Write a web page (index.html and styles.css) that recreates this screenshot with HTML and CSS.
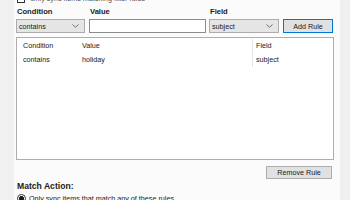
FILE: index.html
```html
<!DOCTYPE html>
<html lang="en">
<head>
  <meta charset="UTF-8" />
  <title>Sync Rules</title>
  <link rel="stylesheet" href="styles.css">
</head>
<body>

<div class="strip"></div>

<main class="panel">
  <div class="top-option">
    <span class="checkbox"></span>
    <span>Only sync items matching filter rules</span>
  </div>

  <div class="rule-form">
    <label class="field-label">Condition</label>
    <label class="field-label">Value</label>
    <label class="field-label">Field</label>
    <span></span>

    <div class="select">
      <span>contains</span>
      <svg width="7" height="4" viewBox="0 0 7 4"><path d="M0.5 0.5 L3.5 3.3 L6.5 0.5" fill="none" stroke="#707070" stroke-width="1"/></svg>
    </div>
    <div class="text-input"></div>
    <div class="select">
      <span>subject</span>
      <svg width="7" height="4" viewBox="0 0 7 4"><path d="M0.5 0.5 L3.5 3.3 L6.5 0.5" fill="none" stroke="#707070" stroke-width="1"/></svg>
    </div>
    <button class="btn btn-default">Add Rule</button>
  </div>

  <div class="rule-list">
    <div class="rule-row">
      <span>Condition</span>
      <span>Value</span>
      <span class="col-field">Field</span>
    </div>
    <div class="rule-row">
      <span>contains</span>
      <span>holiday</span>
      <span class="col-field">subject</span>
    </div>
  </div>

  <div class="list-actions">
    <button class="btn">Remove Rule</button>
  </div>

  <div class="section-title">Match Action:</div>
  <div class="radio-row">
    <span class="radio"></span>
    <span>Only sync items that match any of these rules</span>
  </div>
</main>

<div class="strip strip-right"></div>

</body>
</html>
```

FILE: styles.css
```css
* {
  box-sizing: border-box;
  font-family: 'Liberation Sans', Arial, sans-serif;
}

body {
  margin: 0;
  display: flex;
  height: 200px;
  overflow: hidden;
  background-color: #f0f0f0;
  color: #1a1a1a;
  font-size: 7.2px;
}

.strip {
  width: 14px;
  flex-shrink: 0;
  background-color: #f0f0f0;
}

.strip-right {
  width: 10px;
}

.panel {
  flex-grow: 1;
  background-color: #fbfbfb;
  padding: 0 6px 0 2px;
}

.top-option {
  display: flex;
  align-items: center;
  gap: 5px;
  height: 9px;
  margin-top: -6px;
  padding-left: 1px;
  color: #555;
}

.checkbox {
  width: 8px;
  height: 8px;
  border: 1px solid #333;
  background-color: #fff;
}

.rule-form {
  display: grid;
  grid-template-columns: 69px 116px 70px 50px;
  column-gap: 4px;
  margin-top: 3px;
}

.rule-form > :nth-child(2),
.rule-form > :nth-child(6) {
  margin-right: -1px;
}

.field-label {
  font-weight: bold;
  font-size: 7.6px;
  padding-left: 1px;
  height: 13px;
  line-height: 12px;
}

.select {
  height: 14px;
  background-color: #e5e5e5;
  border: 1px solid #acacac;
  display: flex;
  align-items: center;
  justify-content: space-between;
  padding: 0 5px 0 2px;
}

.text-input {
  height: 14px;
  background-color: #fff;
  border: 1px solid #8c8c8c;
}

.btn {
  height: 14px;
  padding: 0;
  font-size: 7.2px;
  color: #1a1a1a;
  background-color: #e1e1e1;
  border: 1px solid #adadad;
}

.btn-default {
  border-color: #0078d7;
}

.rule-list {
  margin-top: 4px;
  height: 123px;
  background-color: #fff;
  border: 1px solid #adadad;
  padding-top: 1px;
}

.rule-row {
  display: grid;
  grid-template-columns: 59px 170px 1fr;
  padding-left: 6px;
  height: 14px;
  line-height: 14px;
}

.col-field {
  border-left: 1px solid #e3e3e3;
  padding-left: 3px;
}

.list-actions {
  display: flex;
  justify-content: flex-end;
  padding-right: 2px;
  margin-top: 6px;
}

.list-actions .btn {
  width: 66px;
  height: 13px;
}

.section-title {
  font-weight: bold;
  font-size: 8.6px;
  margin-top: 2px;
  padding-left: 1px;
  height: 11px;
  line-height: 11px;
}

.radio-row {
  display: flex;
  align-items: center;
  gap: 3px;
  margin-top: 2px;
  padding-left: 1px;
}

.radio {
  width: 9px;
  height: 9px;
  border-radius: 50%;
  border: 1px solid #333;
  background: radial-gradient(circle, #1a1a1a 0 2.2px, #fff 2.6px);
}
```
